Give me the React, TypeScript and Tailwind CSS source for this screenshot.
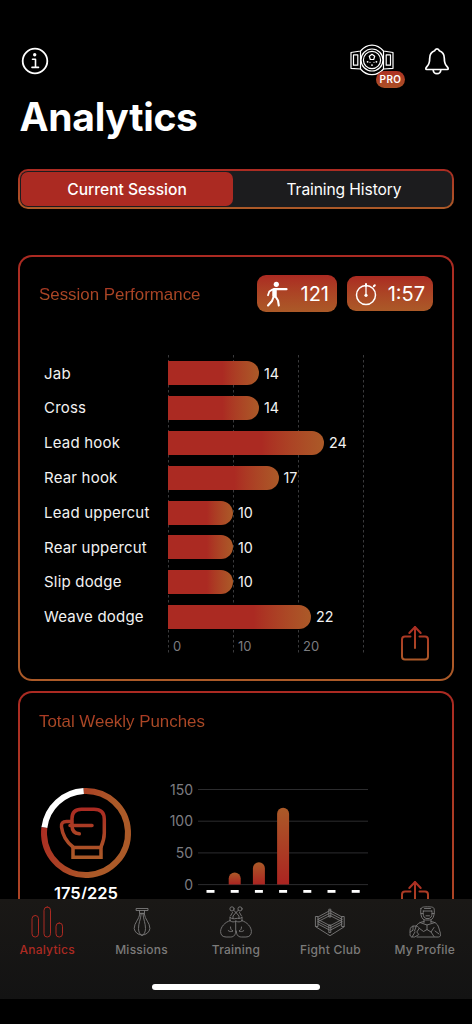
import type { ReactNode } from 'react'

type Move = { label: string; count: number }

const MOVES: Move[] = [
  { label: 'Jab', count: 14 },
  { label: 'Cross', count: 14 },
  { label: 'Lead hook', count: 24 },
  { label: 'Rear hook', count: 17 },
  { label: 'Lead uppercut', count: 10 },
  { label: 'Rear uppercut', count: 10 },
  { label: 'Slip dodge', count: 10 },
  { label: 'Weave dodge', count: 22 },
]

const WEEK = [0, 19, 35, 121, 0, 0, 0]

const PX_PER_HIT = 6.5

export default function App() {
  return (
    <div className="relative flex h-[1024px] w-[472px] flex-col overflow-hidden bg-black font-['Inter',sans-serif] text-white">
      <Gradients />

      <header className="flex h-[93px] shrink-0 items-start justify-between pt-[44px] pr-[21px] pl-[20px]">
        <InfoIcon />
        <div className="flex gap-[29px]">
          <div className="relative">
            <BeltIcon />
            <span className="absolute top-[27px] left-[26px] flex h-[17px] w-[29px] items-center justify-center rounded-full bg-linear-to-b from-[#ad3023] to-[#ab5027] text-[10px] font-semibold tracking-[0.4px]">
              PRO
            </span>
          </div>
          <BellIcon />
        </div>
      </header>

      <h1 className="ml-[19.5px] h-[76px] shrink-0 text-[39px] leading-[48px] font-bold tracking-[-0.3px]">Analytics</h1>

      <main className="flex flex-col px-[18px]">
        <div className="h-[40px] rounded-[10px] bg-linear-to-b from-[#ab2a22] to-[#ab5a28] p-[2px]">
          <div className="flex h-full rounded-[8px] bg-[#1c1c1e] p-px text-[15.6px]">
            <div className="flex w-[212px] items-center justify-center rounded-[7px] bg-[#ab2a22] pt-px font-medium">
              Current Session
            </div>
            <div className="flex flex-1 items-center justify-center pt-px pl-[4px] tracking-[-0.1px]">Training History</div>
          </div>
        </div>

        <Card className="mt-[46px] h-[426px]">
          <div className="flex items-center justify-between pt-[18px] pr-[19px] pl-[19px]">
            <CardTitle>Session Performance</CardTitle>
            <div className="flex items-center gap-[10px]">
              <Pill className="h-[37px] w-[80px]">
                <FighterIcon />
                <span>121</span>
              </Pill>
              <Pill className="h-[35px] w-[86px]">
                <StopwatchIcon />
                <span>1:57</span>
              </Pill>
            </div>
          </div>
          <MovesChart />
          <div className="absolute right-[22px] bottom-[18px]">
            <ShareIcon />
          </div>
        </Card>

        <Card className="mt-[10px] h-[426px]">
          <div className="pt-[15px] pl-[19px]">
            <CardTitle>Total Weekly Punches</CardTitle>
          </div>
          <div className="mt-[46px] flex pl-[20px]">
            <div className="flex w-[92px] flex-col items-center pt-[7px]">
              <PunchGoal done={175} goal={225} />
              <span className="mt-px text-[16.5px] leading-[26px] font-semibold">175/225</span>
            </div>
            <WeekChart />
          </div>
          <div className="absolute top-[187px] right-[22px]">
            <ShareIcon />
          </div>
        </Card>
      </main>

      <nav className="absolute inset-x-0 bottom-0 h-[125px] bg-black">
        <div className="flex h-[100px] bg-linear-to-b from-[#1a1816] to-[#131313] pt-[7px]">
          <Tab label="Analytics" active>
            <rect x="1" y="9.5" width="6.5" height="21.5" rx="3.2" />
            <rect x="13" y="1" width="6.5" height="30" rx="3.2" />
            <rect x="25" y="17" width="6.5" height="14" rx="3.2" />
          </Tab>
          <Tab label="Missions">
            <path d="M10.5 2.5h11.5v2h-11.5zM13.5 4.5v3.2h5v-3.2" />
            <path d="M14 7.7C13 14 8.2 16.5 8.2 22.5a7.9 7.3 0 0 0 15.7 0C23.9 16.5 19 14 18.2 7.7z" />
            <path d="M15.2 8C14.5 14 12.5 17 12.5 22.5c0 3.5 1.4 6 3.5 7.2 2.1-1.2 3.5-3.7 3.5-7.2C19.5 17 17.5 14 17 8" />
          </Tab>
          <Tab label="Training">
            <circle cx="12" cy="2.9" r="2.1" />
            <circle cx="20" cy="2.9" r="2.1" />
            <path d="M13.7 4.3 16 6.5l2.3-2.2M16 6.5 13 10v2.5M16 6.5l3 3.5v2.5M12.5 6.5 10.5 10M19.5 6.5l2 3.5M10 11.5c2 1.5 4 1.5 6 1s4 .5 6-1M10 11.5v3.2M22 11.5v3.2M10 14.7c2 1.6 4 1.6 6 .3 2 1.3 4 1.3 6-.3" />
            <path d="M10 14.7C5 16 .6 21 .6 25.5c0 3.5 2 5.5 5.5 5.5h4.5c3.5 0 5.1-2.5 5.1-6V15M22 14.7c5 1.3 9.4 6.3 9.4 10.8 0 3.5-2 5.5-5.5 5.5h-4.5c-3.5 0-5.1-2.5-5.1-6" />
            <path d="M10.5 21c0 2 .7 3.2 2.5 4-1.8 1-3.5.7-4.8-.4M21.5 21c0 2-.7 3.2-2.5 4 1.8 1 3.5.7 4.8-.4" />
          </Tab>
          <Tab label="Fight Club">
            <path d="M4 11 16 4.5 28 11M4 13.3 16 7l12 6.3M4 15.6 16 9.5l12 6.1" />
            <path d="m4 13.5 12 6.2 12-6.2M4 15.8 16 22l12-6.2M4 18l12 6.3L28 18M1.8 20.8 16 29.7l14.2-8.9" />
            <path d="M1.8 10.5H4v10H1.8zM28 10.5h2.2v10H28zM15.2 3.2h1.6V11h-1.6zM15.2 19h1.6v7.5h-1.6z" />
          </Tab>
          <Tab label="My Profile">
            <path d="M12 2.5C12.5 1.2 14 .8 18.5.8s6 .4 6.5 1.7c.6 2 .4 5-.3 7.5-.6 2.5-2.2 4-4.2 4h-4c-2 0-3.5-1.5-4.2-4-.6-2.5-.9-5.5-.3-7.5z" />
            <path d="M14 5h9M14.5 5c-.7 2-.4 4 .5 6l2 1.5h3.2l2-1.5c.9-2 1.2-4 .5-6M12 7.5h2M23 7.5h2M15.5 2.5h6M15 14v2.5M22 14v2.5M17 9.8h3.5" />
            <path d="M15 15.5c-4.5.5-7 2.5-8.5 5.5M22 15.5c4 .5 6.5 2.2 7.5 5.5l2 6.5c.4 2-.3 3.5-2 3.5H8M11 16.5l7 2.5 8-2.5M18 19v4.5" />
            <path d="M1 24c0-2.5 2-4.5 5-4 2-.3 4 .7 4 2.7L7.8 26l2 2.5-4 2.5H3.3C1.5 31 .7 29.5 1 28zM4 20.2v4L1.2 26M7 21l-1.5 4M25 21.5l-3 4.5 3 4.5M10.5 22.5l4 3 3.5-2 4 2.5M26 25l4 3M3 31l3-5" />
          </Tab>
        </div>
        <div className="absolute bottom-[34px] left-[152px] h-[6px] w-[168px] rounded-full bg-white" />
      </nav>
    </div>
  )
}

function Card({ className, children }: { className: string; children: ReactNode }) {
  return (
    <section className={`${className} rounded-[14px] bg-linear-to-b from-[#ab2a22] to-[#ab5a28] p-[2px]`}>
      <div className="relative h-full rounded-[12px] bg-black">{children}</div>
    </section>
  )
}

function CardTitle({ children }: { children: ReactNode }) {
  return (
    <h2 className="w-fit bg-linear-to-b from-[#ab2a22] to-[#ab5a28] bg-clip-text pt-[2px] font-['Liberation_Sans',Arial,sans-serif] text-[16.9px] leading-[24px] text-transparent">
      {children}
    </h2>
  )
}

function Pill({ className, children }: { className: string; children: ReactNode }) {
  return (
    <div
      className={`${className} flex items-center justify-between rounded-[9px] bg-linear-to-b from-[#ab2a22] to-[#ab5a28] px-[8px] text-[20px]`}
    >
      {children}
    </div>
  )
}

function MovesChart() {
  return (
    <div className="relative mt-[43px] ml-[24px] h-[300px] pt-px">
      {/* grid lines every 10 hits */}
      <div className="absolute inset-y-0 left-[124px] flex">
        {[0, 10, 20, 30].map(tick => (
          <div key={tick} className="relative w-[65px]">
            <svg width="1" height="300" className="block">
              <line x1="0.5" y1="0" x2="0.5" y2="300" stroke="#3a3a3c" strokeDasharray="2.5 2.5" />
            </svg>
            {tick < 30 && (
              <span className="absolute bottom-0 left-[5px] text-[13px] leading-[18px] text-[#7c7c80]">{tick}</span>
            )}
          </div>
        ))}
      </div>
      {MOVES.map(move => (
        <div key={move.label} className="relative flex h-[34.8px] items-center text-[15px] text-[#f2f2f2]">
          <span className="w-[124px] pt-px tracking-[0.2px]">{move.label}</span>
          <div
            className="h-[24px] rounded-r-full bg-linear-to-r from-[#ab2a22] from-60% to-[#ab5a28]"
            style={{ width: move.count * PX_PER_HIT }}
          />
          <span className="ml-[5px] text-[14.3px]">{move.count}</span>
        </div>
      ))}
    </div>
  )
}

function PunchGoal({ done, goal }: { done: number; goal: number }) {
  const length = 2 * Math.PI * 42
  const filled = (length * done) / goal
  return (
    <svg width="92" height="92" viewBox="-1 -1 92 92" fill="none">
      <g strokeWidth="6" transform="rotate(-93 45 45)">
        <circle cx="45" cy="45" r="42" stroke="#fff" strokeDasharray={`${length - filled} ${length}`} strokeDashoffset={-filled} />
        <circle cx="45" cy="45" r="42" stroke="url(#ring)" strokeDasharray={`${filled} ${length}`} />
      </g>
      <g stroke="url(#glove)" strokeWidth="3.5" strokeLinecap="round">
        <path d="M31 37.5v-7c0-6 3.5-9.3 9.5-9.3H53c7 0 10.3 3.5 10.3 10V45c0 5-1.3 9.5-3.3 14" />
        <path d="M30.5 33.5h-5c-3.8 0-5.5 2-5 5.5 1 8 5 15 11.5 20" />
        <path d="M29 37.5h22M31 37.5c0 5 2.5 8 7.3 8.3" />
        <path d="M32 59.5h28v9.8H32z" />
      </g>
    </svg>
  )
}

function WeekChart() {
  return (
    <svg width="212" height="128" viewBox="0 -8 212 128" className="ml-[27px]">
      {[150, 100, 50, 0].map((tick, i) => (
        <g key={tick}>
          <text x="34" y={6.6 + i * 31.7} textAnchor="end" fontSize="14" fill="#7c7c80">
            {tick}
          </text>
          <line x1="39" x2="209" y1={1.5 + i * 31.7} y2={1.5 + i * 31.7} stroke="#2c2c2e" />
        </g>
      ))}
      {WEEK.map((value, i) => {
        const x = 51.5 + i * 24.2
        const h = value * 0.634
        return (
          <g key={i}>
            {value > 0 && (
              <path
                d={`M${x - 6} 96.5v${6 - h}a6 6 0 0 1 12 0v${h - 6}z`}
                fill="url(#weekBar)"
              />
            )}
            <rect x={x - 4} y="102" width="8" height="2.8" fill="#fff" />
          </g>
        )
      })}
    </svg>
  )
}

function Tab({ label, active = false, children }: { label: string; active?: boolean; children: ReactNode }) {
  return (
    <div className={`flex flex-1 flex-col items-center ${active ? 'text-[#ab2a22]' : 'text-[#7c7b7a]'}`}>
      <svg
        width="32"
        height="32"
        viewBox="0 0 32 32"
        fill="none"
        stroke="currentColor"
        strokeWidth={active ? 1 : 0.9}
        strokeLinecap="round"
        strokeLinejoin="round"
      >
        {children}
      </svg>
      <span className="mt-[3px] text-[12px] leading-[18px] font-medium tracking-[0.25px]">{label}</span>
    </div>
  )
}

function Gradients() {
  return (
    <svg width="0" height="0" className="absolute">
      <defs>
        <linearGradient id="share" gradientUnits="userSpaceOnUse" x1="0" y1="0" x2="0" y2="36">
          <stop stopColor="#ab2a22" />
          <stop offset="1" stopColor="#ab5a28" />
        </linearGradient>
        <linearGradient id="glove" gradientUnits="userSpaceOnUse" x1="0" y1="20" x2="0" y2="70">
          <stop stopColor="#ab2a22" />
          <stop offset="1" stopColor="#ab5a28" />
        </linearGradient>
        <linearGradient id="ring" gradientUnits="userSpaceOnUse" x1="0" y1="30" x2="90" y2="60" gradientTransform="rotate(93 45 45)">
          <stop stopColor="#ab2a22" />
          <stop offset="0.7" stopColor="#ab5a28" />
        </linearGradient>
        <linearGradient id="weekBar" x1="0" y1="0" x2="0" y2="1">
          <stop stopColor="#ab5a28" />
          <stop offset="1" stopColor="#ab2421" />
        </linearGradient>
      </defs>
    </svg>
  )
}

function InfoIcon() {
  return (
    <svg width="30" height="34" viewBox="0 0 30 34" fill="none" stroke="#fff" strokeWidth="1.8" strokeLinecap="round" strokeLinejoin="round">
      <circle cx="15" cy="17" r="12.3" />
      <circle cx="14.7" cy="10.7" r="1.7" fill="#fff" stroke="none" />
      <path d="M12.5 15.2h3v8M12 23.4h6.5" strokeWidth="1.6" />
    </svg>
  )
}

function BeltIcon() {
  return (
    <svg width="44" height="34" viewBox="0 0 44 34" fill="none" stroke="#fff" strokeWidth="1.2" strokeLinejoin="round">
      <path d="M1 8.5 10.5 7C13.5 3.5 17.5 1.2 22 1.2S30.500 3.500 33.500 7l9.500 1.500v15.800L33.500 25c-3 3.500-7 5.700-11.500 5.700S13.500 28.500 10.500 25L1 24.300z" />
      <path d="M10.500 7v18M33.500 7v18M3.500 10.800h4.300v10.400H3.500zM36.200 10.800h4.300v10.400h-4.300z" />
      <circle cx="22" cy="16" r="11" />
      <circle cx="22" cy="16" r="8.600" />
      <path d="m22 10.300 2.700 2-1 3.200h-3.400l-1-3.200z" />
      <g fill="#fff" stroke="none">
        <circle cx="17.6" cy="17.8" r="0.9" />
        <circle cx="22" cy="21.1" r="0.9" />
        <circle cx="26.4" cy="17.8" r="0.9" />
        <circle cx="20" cy="18.3" r=".6" />
        <circle cx="24" cy="18.3" r=".6" />
      </g>
    </svg>
  )
}

function BellIcon() {
  return (
    <svg width="28" height="34" viewBox="0 0 28 34" fill="none" stroke="#fff" strokeWidth="1.7" strokeLinecap="round" strokeLinejoin="round">
      <path d="M14 4.8c-1.3 0-2 .8-2.3 1.9-3.4 1.1-5 3.9-5 7.5 0 4.3-.7 6.3-2.6 8.2-.9 1-1.3 1.5-1.3 2.3 0 .5.4.8 1 .8h20.4c.6 0 1-.3 1-.8 0-.8-.4-1.300-1.300-2.300-1.900-1.900-2.600-3.900-2.600-8.200 0-3.600-1.600-6.400-5-7.500C16 5.600 15.300 4.800 14 4.800z" />
      <path d="M10.200 26c.2 2.300 1.700 3.700 3.800 3.700s3.600-1.400 3.800-3.700" />
    </svg>
  )
}

function FighterIcon() {
  return (
    <svg width="24" height="26" viewBox="0 0 24 26" fill="none" stroke="#fff" strokeLinecap="round" strokeLinejoin="round">
      <circle cx="11.3" cy="3.3" r="2.6" fill="#fff" stroke="none" />
      <path d="M9.5 9.5v5" strokeWidth="4.5" />
      <path d="M9 8.2h12.5" strokeWidth="2.2" />
      <path d="M7.5 8.5 4.3 10.5l-1.3 3.7" strokeWidth="1.8" />
      <path d="m8.5 16-1.5 4-4 4.5M10.5 15.5l2.5 4 .8 5" strokeWidth="2.1" />
    </svg>
  )
}

function StopwatchIcon() {
  return (
    <svg width="22" height="26" viewBox="0 0 22 26" fill="none" stroke="#fff" strokeWidth="1.5" strokeLinecap="round">
      <circle cx="11" cy="14" r="9.5" />
      <path d="M11 3v2M18.8 5.3l1-1" strokeWidth="2" />
      <path d="M11 5v8" strokeWidth="1.3" />
      <circle cx="11" cy="14.3" r="1.6" fill="#fff" stroke="none" />
    </svg>
  )
}

function ShareIcon() {
  return (
    <svg width="30" height="36" viewBox="0 0 30 36" fill="none" stroke="url(#share)" strokeWidth="2" strokeLinecap="round" strokeLinejoin="round">
      <path d="M10.5 11.5H5c-1.600 0-3 1.200-3 3v17c0 1.800 1.400 3 3 3h20c1.600 0 3-1.200 3-3v-17c0-1.800-1.400-3-3-3h-5.500" />
      <path d="m9.300 8 5.700-6 5.700 6" />
      <path d="M15 2c.01 7 .01 14 0 21" />
    </svg>
  )
}
